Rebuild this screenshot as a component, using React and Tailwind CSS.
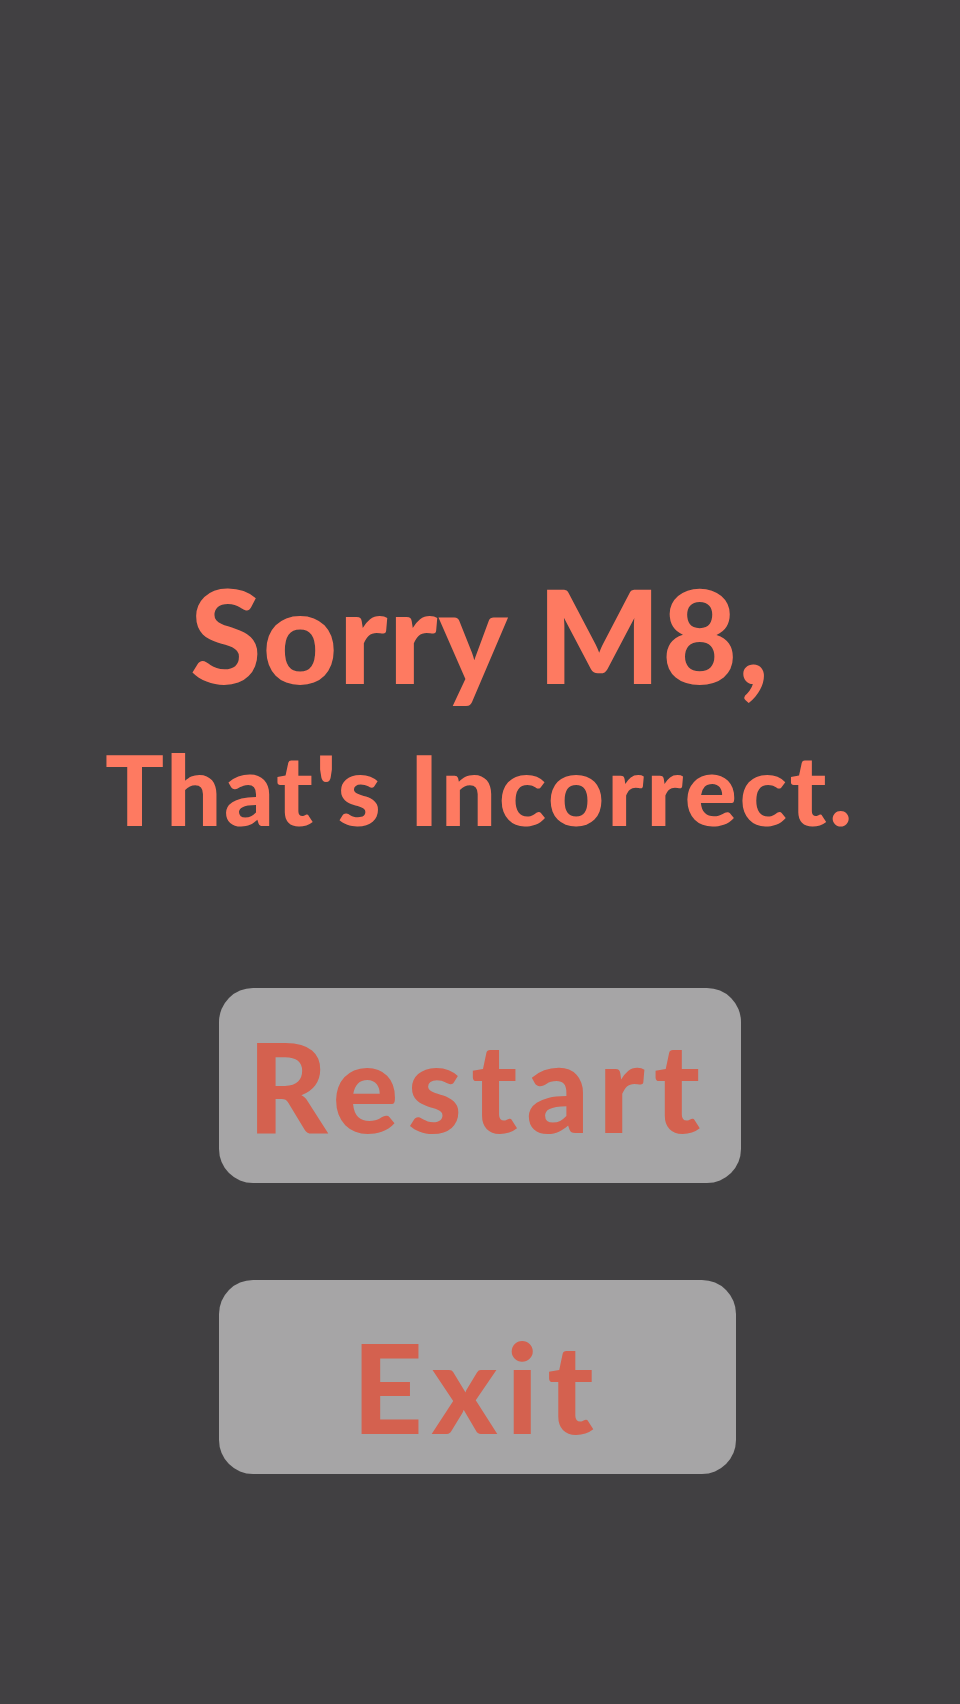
import React from "react";

function App() {
  return (
    <div
      className="w-full min-h-[1704px] bg-[#414042] flex flex-col items-center"
      style={{ fontFamily: "Lato, 'Noto Sans', sans-serif" }}
    >
      {/* message */}
      <div className="mt-[569px] flex flex-col items-center text-[#fe7a61] font-black">
        <h1 className="text-[130px] leading-none tracking-[1px]">Sorry M8,</h1>
        <h2 className="mt-[40px] text-[98px] leading-none tracking-[2.5px]">That's Incorrect.</h2>
      </div>

      {/* buttons */}
      <div className="mt-[151px] flex flex-col gap-[97px] items-start">
        <button className="w-[522px] h-[195px] rounded-[34px] bg-[#a6a5a6] text-[#d4614f] text-[123px] font-black leading-none tracking-[9px] pr-[3px]">
          Restart
        </button>
        <button className="w-[517px] h-[194px] rounded-[34px] bg-[#a6a5a6] text-[#d4614f] text-[123px] font-black leading-none tracking-[9px] pt-[18px]">
          Exit
        </button>
      </div>
    </div>
  );
}

export default App;
